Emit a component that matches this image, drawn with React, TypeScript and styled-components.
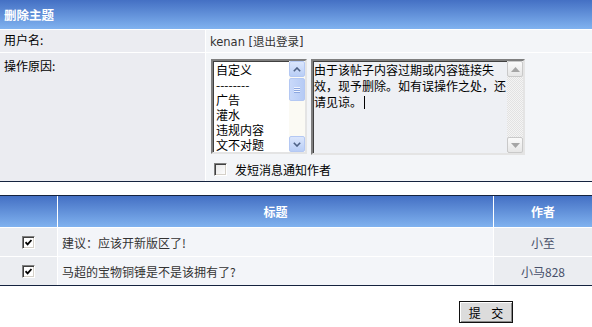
import React from "react";
import styled, { createGlobalStyle, css } from "styled-components";

const GlobalStyle = createGlobalStyle`
  body {
    margin: 0;
    background: #fff;
    color: #000;
    font: 12px "Noto Sans CJK SC", "DejaVu Sans", sans-serif;
  }
`;

const headGradient = css`
  background: linear-gradient(#4470c4, #80b2ef);
  color: #fff;
  font-weight: bold;
`;

const Panel = styled.div`
  display: grid;
  grid-template-columns: 205px 1fr;
  gap: 1px;
  border-bottom: 1px solid #15233f;
`;

const Caption = styled.div`
  ${headGradient};
  grid-column: 1 / -1;
  height: 29px;
  padding-left: 4px;
  display: flex;
  align-items: center;
  font-size: 12.5px;
`;

const Label = styled.div<{ $top: number }>`
  background: #ebecf1;
  padding: ${p => p.$top}px 4px 0;
  line-height: 14px;
`;

const Value = styled.div<{ $tall?: boolean }>`
  background: #f3f5f8;
  color: #333;
  height: ${p => (p.$tall ? "128px" : "22px")};
  padding: ${p => (p.$tall ? "6px 5px 0" : "0 4px")};
  display: flex;
  flex-direction: column;
  justify-content: ${p => (p.$tall ? "flex-start" : "center")};
  font-family: "DejaVu Sans", "Noto Sans CJK SC", sans-serif;
  font-size: 11.5px;
  box-sizing: border-box;
`;

const Fields = styled.div`
  display: flex;
  gap: 4px;
  font: 12px "Noto Sans CJK SC", sans-serif;
`;

const Sunken = css`
  box-sizing: border-box;
  border: 2px solid;
  border-color: #7f7f7f #e4e4e4 #e4e4e4 #7f7f7f;
  box-shadow: inset 1px 1px #404040;
  display: flex;
`;

const ListBox = styled.div`
  ${Sunken};
  width: 96px;
  height: 95px;
  background: #fff;
`;

const Options = styled.div`
  flex: 1;
  padding: 1px 0 0 3px;
  line-height: 15px;
  color: #000;
  overflow: hidden;
`;

const ReasonBox = styled.div`
  ${Sunken};
  width: 214px;
  height: 96px;
  background: #eef0f4;
`;

const ReasonText = styled.div`
  flex: 1;
  padding: 1px 0 0 1px;
  line-height: 16px;
  color: #000;
  overflow: hidden;
`;

const Caret = styled.span`
  display: inline-block;
  width: 1px;
  height: 13px;
  margin-left: 2px;
  vertical-align: -2px;
  background: #000;
`;

const ScrollBar = styled.div<{ $off?: boolean }>`
  width: 16px;
  display: flex;
  flex-direction: column;
  background: ${p =>
    p.$off
      ? "repeating-conic-gradient(#f4f4f4 0% 25%, #e2e2e2 0% 50%) 0 0 / 2px 2px"
      : "#fbfaf4"};
`;

const ScrollButton = styled.div<{ $off?: boolean }>`
  height: 16px;
  box-sizing: border-box;
  border: 1px solid ${p => (p.$off ? "#c9c9c9" : "#b4c8f3")};
  border-radius: 2px;
  background: ${p =>
    p.$off ? "linear-gradient(#fafafa, #e6e6e6)" : "linear-gradient(#dbe6fc, #b9cef6)"};
  display: flex;
  align-items: center;
  justify-content: center;
`;

const Track = styled.div`
  flex: 1;
`;

const Thumb = styled.div`
  height: 23px;
  margin-top: 1px;
  box-sizing: border-box;
  border: 1px solid #b4c8f3;
  border-radius: 2px;
  background: linear-gradient(90deg, #c9d9fa, #b6cbf5);
  display: flex;
  flex-direction: column;
  align-items: center;
  justify-content: center;
  gap: 1px;
  & > i {
    display: block;
    width: 6px;
    height: 1px;
    background: #eef3fe;
    box-shadow: 0 1px #8ea8e0;
  }
`;

const NotifyRow = styled.label`
  display: flex;
  align-items: center;
  gap: 8px;
  margin-top: 6px;
  padding-left: 3px;
  color: #000;
  font: 12px "Noto Sans CJK SC", sans-serif;
`;

const Box = styled.span<{ $checked?: boolean }>`
  width: 13px;
  height: 13px;
  box-sizing: border-box;
  border: 1px solid;
  border-color: #808080 #fff #fff #808080;
  box-shadow: inset 1px 1px #404040, inset -1px -1px #d4d0c8;
  background: ${p => (p.$checked ? "#fff" : "linear-gradient(135deg, #e6e6e6, #fff)")};
  display: inline-flex;
  align-items: center;
  justify-content: center;
`;

const Topics = styled.div`
  margin-top: 13px;
  display: grid;
  grid-template-columns: 57px 1fr 98px;
  gap: 1px;
  border-top: 1px solid #15233f;
  border-bottom: 1px solid #15233f;
`;

const HeadCell = styled.div`
  ${headGradient};
  height: 31px;
  display: flex;
  align-items: center;
  justify-content: center;
`;

const Cell = styled.div<{ $align?: "left" | "center"; $shade?: boolean }>`
  height: 28px;
  background: ${p => (p.$shade ? "#ebedf1" : "#f3f5f9")};
  color: ${p => (p.$shade ? "#48506a" : "#333")};
  display: flex;
  align-items: center;
  justify-content: ${p => (p.$align === "left" ? "flex-start" : "center")};
  padding-left: ${p => (p.$align === "left" ? "4px" : "0")};
`;

const Actions = styled.div`
  padding: 15px 0 0 459px;
`;

const SubmitButton = styled.button`
  width: 54px;
  height: 22px;
  padding: 0;
  border: 1px solid #111;
  background: #dcdcdc;
  box-shadow: inset 1px 1px #fff, inset -1px -1px #8a8a8a;
  font: 12px "Noto Sans CJK SC", sans-serif;
  color: #000;
  word-spacing: 8px;
`;

const Arrow = ({ up, off }: { up?: boolean; off?: boolean }) =>
  off ? (
    <svg width="9" height="5" viewBox="0 0 9 5">
      <path d={up ? "M0 5 L4.5 0 L9 5 Z" : "M0 0 L4.5 5 L9 0 Z"} fill="#a5a5a5" />
    </svg>
  ) : (
    <svg width="8" height="5" viewBox="0 0 8 5">
      <path
        d={up ? "M0.8 4.2 L4 1 L7.2 4.2" : "M0.8 0.8 L4 4 L7.2 0.8"}
        fill="none"
        stroke="#4d6185"
        strokeWidth="1.6"
      />
    </svg>
  );

const Check = () => (
  <svg width="7" height="7" viewBox="0 0 7 7">
    <path d="M0.5 3.2 L2.6 5.4 L6.5 1" fill="none" stroke="#000" strokeWidth="1.8" />
  </svg>
);

const reasons = ["自定义", "--------", "广告", "灌水", "违规内容", "文不对题"];

const topics = [
  { title: "建议：应该开新版区了!", author: "小至" },
  { title: "马超的宝物铜锤是不是该拥有了?", author: "小马828" },
];

const App = () => (
  <>
    <GlobalStyle />
    <Panel>
      <Caption>删除主题</Caption>
      <Label $top={3}>用户名:</Label>
      <Value>kenan [退出登录]</Value>
      <Label $top={6}>操作原因:</Label>
      <Value $tall>
        <Fields>
          <ListBox>
            <Options>
              {reasons.map(r => (
                <div key={r}>{r}</div>
              ))}
            </Options>
            <ScrollBar>
              <ScrollButton>
                <Arrow up />
              </ScrollButton>
              <Track>
                <Thumb>
                  <i />
                  <i />
                  <i />
                </Thumb>
              </Track>
              <ScrollButton>
                <Arrow />
              </ScrollButton>
            </ScrollBar>
          </ListBox>
          <ReasonBox>
            <ReasonText>
              由于该帖子内容过期或内容链接失效，现予删除。如有误操作之处，还请见谅。
              <Caret />
            </ReasonText>
            <ScrollBar $off>
              <ScrollButton $off>
                <Arrow up off />
              </ScrollButton>
              <Track />
              <ScrollButton $off>
                <Arrow off />
              </ScrollButton>
            </ScrollBar>
          </ReasonBox>
        </Fields>
        <NotifyRow>
          <Box />
          发短消息通知作者
        </NotifyRow>
      </Value>
    </Panel>

    <Topics>
      <HeadCell />
      <HeadCell>标题</HeadCell>
      <HeadCell>作者</HeadCell>
      {topics.map(t => (
        <React.Fragment key={t.title}>
          <Cell $shade>
            <Box $checked>
              <Check />
            </Box>
          </Cell>
          <Cell $align="left">{t.title}</Cell>
          <Cell $shade>{t.author}</Cell>
        </React.Fragment>
      ))}
    </Topics>

    <Actions>
      <SubmitButton>提 交</SubmitButton>
    </Actions>
  </>
);

export default App;
